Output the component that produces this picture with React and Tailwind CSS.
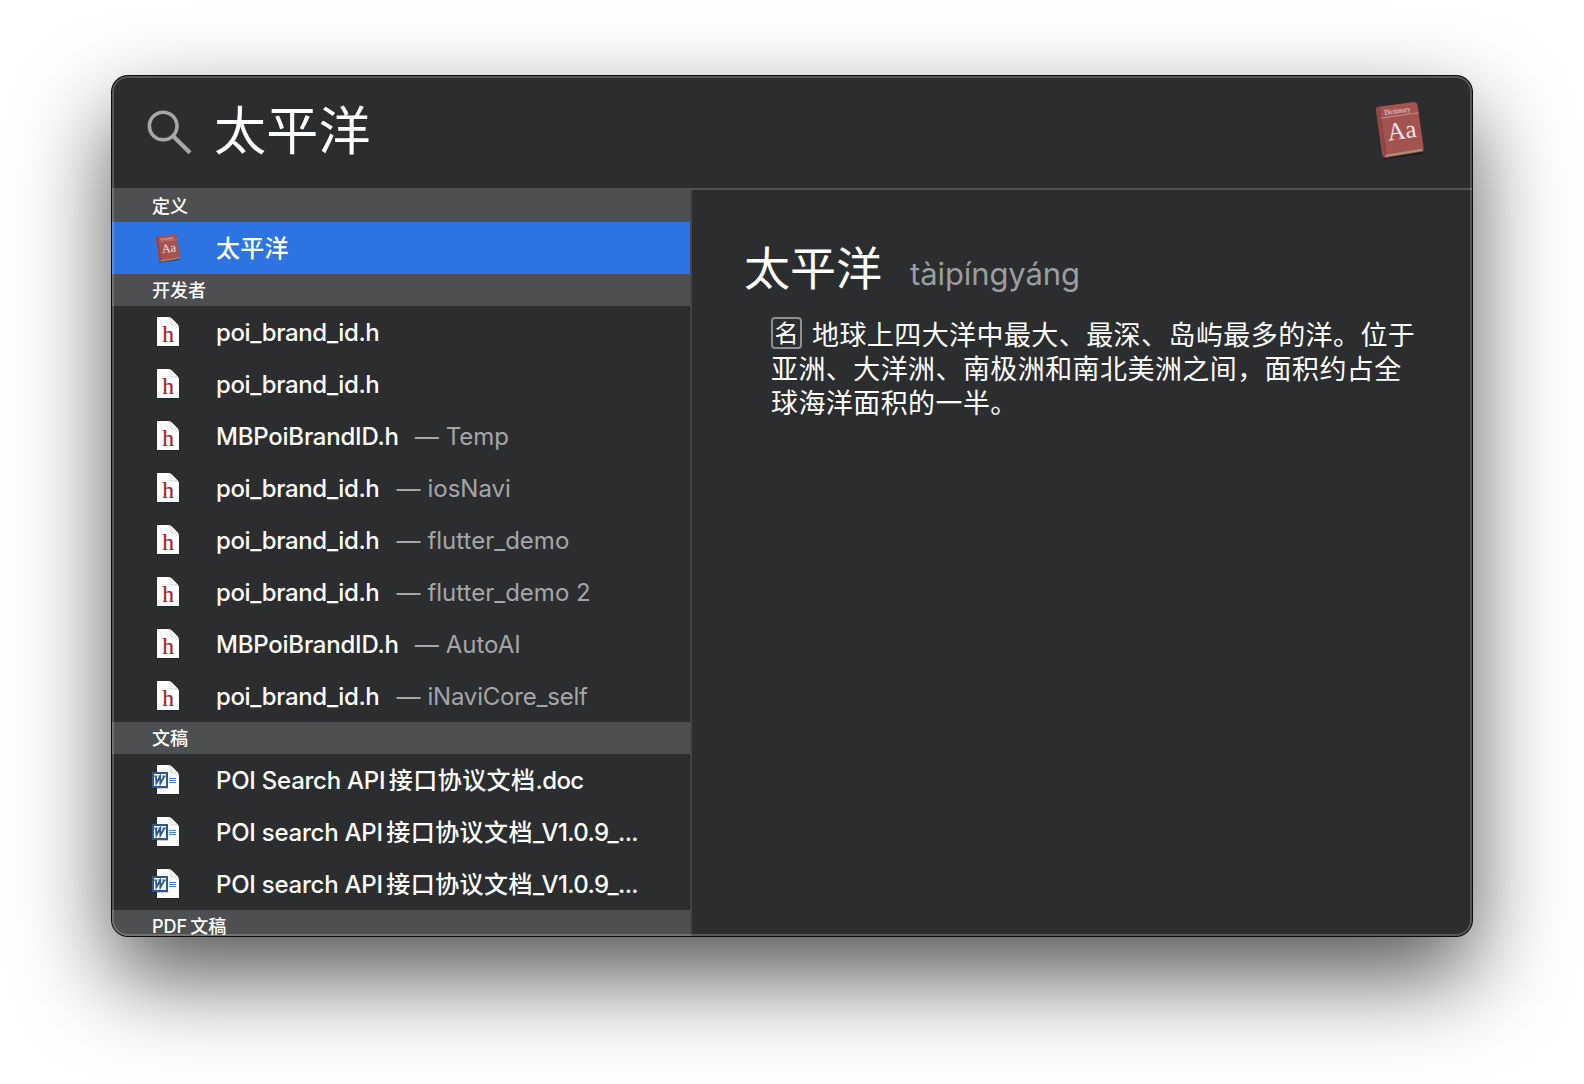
import React from "react";

const developerFiles = [
  { name: "poi_brand_id.h" },
  { name: "poi_brand_id.h" },
  { name: "MBPoiBrandID.h", folder: "Temp" },
  { name: "poi_brand_id.h", folder: "iosNavi" },
  { name: "poi_brand_id.h", folder: "flutter_demo" },
  { name: "poi_brand_id.h", folder: "flutter_demo 2" },
  { name: "MBPoiBrandID.h", folder: "AutoAI" },
  { name: "poi_brand_id.h", folder: "iNaviCore_self" },
];

const documents = [
  { lead: "POI Search API", title: "接口协议文档", tail: ".doc" },
  { lead: "POI search API", title: "接口协议文档", tail: "_V1.0.9_..." },
  { lead: "POI search API", title: "接口协议文档", tail: "_V1.0.9_..." },
];

function SearchIcon() {
  return (
    <svg width="46" height="46" viewBox="0 0 46 46" fill="none" stroke="#a6a7a9">
      <circle cx="16.2" cy="17" r="13.8" strokeWidth="3.6" />
      <path d="M26 27 43 43.8" strokeWidth="4.2" />
    </svg>
  );
}

function DictionaryIcon({ size }) {
  return (
    <svg width={size} height={size} viewBox="0 0 64 64">
      <path d="M12 59 53 53 53 56 14 61.5Z" fill="#000" opacity=".35" />
      <path d="M13 55.5 50 49.5Q53 48 53.5 50L53.6 53.5 15.5 60Q12.5 60 12 57Z" fill="#8d3d3d" />
      <path d="M14.5 56 52.5 50.2V53L15.5 59Z" fill="#a3937b" />
      <path d="M6 11.5Q6 9.3 8.5 8.8L43.5 4Q46.8 3.8 47.5 6.8L53.7 50.5 13.5 57Q12.4 57 12.2 55.8Z" fill="#a45351" />
      <path d="M6 11.5Q6 9.3 8.5 8.8L9.4 8.7 16 56.6 13.5 57Q12.4 57 12.2 55.8Z" fill="#964645" />
      <path d="M9.4 8.7 16 56.6" stroke="#7d3b3b" strokeWidth=".7" />
      <path d="M10.5 20.2 48.8 14.8" stroke="#d49b99" strokeWidth=".8" />
      <g transform="rotate(-8 30 32)" fill="#e9e4e4" fontFamily="'Liberation Serif', serif" textAnchor="middle">
        <text x="30" y="15" fontSize="7.5" textLength="26" lengthAdjust="spacingAndGlyphs">Dictionary</text>
        <text x="31.5" y="41" fontSize="25" textLength="29" lengthAdjust="spacingAndGlyphs">Aa</text>
      </g>
    </svg>
  );
}

function Page({ children }) {
  return (
    <svg className="-mt-0.5" width="32" height="32" viewBox="0 0 32 32">
      <path d="M7 2.8H19.5L29 11V31.6H7Z" fill="#000" opacity=".35" />
      <path d="M7 2H18.5Q20.7 2 22.2 3.7L27.5 9.2Q29 10.8 29 12.5V31H7Z" fill="#fff" />
      <path d="M20.6 3.2V10H28Z" fill="#f4f4f4" />
      <path d="M20.7 3.4V9.9H27.7" fill="none" stroke="#cfcfcf" strokeWidth=".8" />
      {children}
    </svg>
  );
}

function HeaderFileIcon() {
  return (
    <Page>
      <text
        x="18"
        y="27"
        fontSize="23.5"
        fill="#a3202f"
        stroke="#a3202f"
        strokeWidth=".2"
        textAnchor="middle"
        fontFamily="'Liberation Serif', serif"
      >
        h
      </text>
    </Page>
  );
}

function WordIcon() {
  return (
    <Page>
      <path d="M2.5 24.5H18.5V26H2.5Z" fill="#000" opacity=".2" />
      <rect x="2" y="9" width="16" height="16" fill="#2b5799" />
      <rect x="4" y="11" width="12" height="12" fill="#fff" />
      <path d="M4 13.2H7.4M8.6 13.2H11.4M12.6 13.2H15.8" fill="none" stroke="#2b5799" strokeWidth="1.3" />
      <path d="M6 13.2 6.4 20.2 10 13.6 10.4 20.2 14.3 13.2" fill="none" stroke="#2b5799" strokeWidth="1.9" />
      <path d="M19 15.5H26M19 17.5H26M19 19.5H26" stroke="#3d86cf" strokeWidth="1" />
    </Page>
  );
}

function SectionHeader({ children }) {
  return (
    <div className="flex h-8 shrink-0 items-center bg-[#4e4f51] pt-0.5 pl-10 text-[18px] leading-[30px] font-medium text-white">
      {children}
    </div>
  );
}

function Row({ icon, selected, children }) {
  return (
    <div className={selected ? "flex h-[52px] shrink-0 items-center bg-[#2d73e2]" : "flex h-[52px] shrink-0 items-center"}>
      <div className="flex w-[104px] shrink-0 items-center pl-[38px]">{icon}</div>
      <div className="flex items-baseline pt-0.5 text-2xl font-medium whitespace-nowrap text-white">{children}</div>
    </div>
  );
}

export default function App() {
  return (
    <div className="h-[1084px] w-[1584px] overflow-hidden bg-white pt-[76px] pl-28 font-['Inter','Noto_Sans_CJK_SC',sans-serif]">
      <div className="relative flex h-[860px] w-[1360px] flex-col rounded-2xl bg-[#2c2d2f] shadow-[0_0_0_1px_#0b0b0b,0_40px_92px_rgba(0,0,0,0.67)]">
        <div className="flex min-h-0 flex-1 flex-col overflow-hidden rounded-2xl">
          <header className="flex h-[112px] shrink-0 items-center pr-[38px] pl-[35px]">
            <SearchIcon />
            <span className="ml-[21px] flex-1 text-[52px] leading-[60px] font-normal tracking-[0.3px] text-white">
              太平洋
            </span>
            <div className="pb-[5px]">
              <DictionaryIcon size={64} />
            </div>
          </header>
          <div className="h-0.5 shrink-0 bg-[#515254]" />
          <div className="flex min-h-0 flex-1">
            <aside className="flex w-[578px] shrink-0 flex-col overflow-hidden">
              <SectionHeader>定义</SectionHeader>
              <Row
                selected
                icon={
                  <span className="pl-[3px]">
                    <DictionaryIcon size={32} />
                  </span>
                }
              >
                <span className="tracking-[0.3px]">太平洋</span>
              </Row>
              <SectionHeader>开发者</SectionHeader>
              {developerFiles.map((file, i) => (
                <Row key={i} icon={<HeaderFileIcon />}>
                  <span className={file.name.startsWith("poi") ? "mr-px tracking-[-0.38px]" : "tracking-[-0.22px]"}>
                    {file.name}
                  </span>
                  {file.folder && (
                    <span className="ml-4 flex gap-1.5 font-normal text-[#a5a6a7]">
                      <span>—</span>
                      <span className={file.folder.startsWith("iNavi") ? "ml-px tracking-[-0.2px]" : "ml-px"}>
                        {file.folder}
                      </span>
                    </span>
                  )}
                </Row>
              ))}
              <SectionHeader>文稿</SectionHeader>
              {documents.map((doc, i) => (
                <Row key={i} icon={<WordIcon />}>
                  <span className="mr-[3.5px] tracking-[-0.24px]">{doc.lead}</span>
                  <span className="tracking-[0.45px]">{doc.title}</span>
                  <span className="tracking-[-0.6px]">{doc.tail}</span>
                </Row>
              ))}
              <SectionHeader>
                PDF<span className="ml-[3px]">文稿</span>
              </SectionHeader>
            </aside>
            <div className="w-0.5 shrink-0 bg-[#444547]" />
            <main className="flex-1 pt-[46px] pl-[52px] text-white">
              <div className="flex items-baseline">
                <h1 className="text-[46px] leading-[64px] font-normal">太平洋</h1>
                <span className="ml-[28px] text-[31px] tracking-[-0.1px] text-[#9c9d9f]">tàipíngyáng</span>
              </div>
              <div className="mt-[19px] ml-[27px] text-[27px] leading-[34px] font-normal tracking-[0.42px] whitespace-nowrap">
                <div className="flex">
                  <span className="mr-[10px] -mt-[2px] flex h-8 w-[31px] items-center justify-center rounded-[4px] border-2 border-[#8d8e90] pt-0.5 text-2xl tracking-normal">
                    名
                  </span>
                  <span>地球上四大洋中最大、最深、岛屿最多的洋。位于</span>
                </div>
                <div>亚洲、大洋洲、南极洲和南北美洲之间，面积约占全</div>
                <div>球海洋面积的一半。</div>
              </div>
            </main>
          </div>
        </div>
        <div className="pointer-events-none absolute inset-0 rounded-2xl border-2 border-white/20" />
      </div>
    </div>
  );
}
